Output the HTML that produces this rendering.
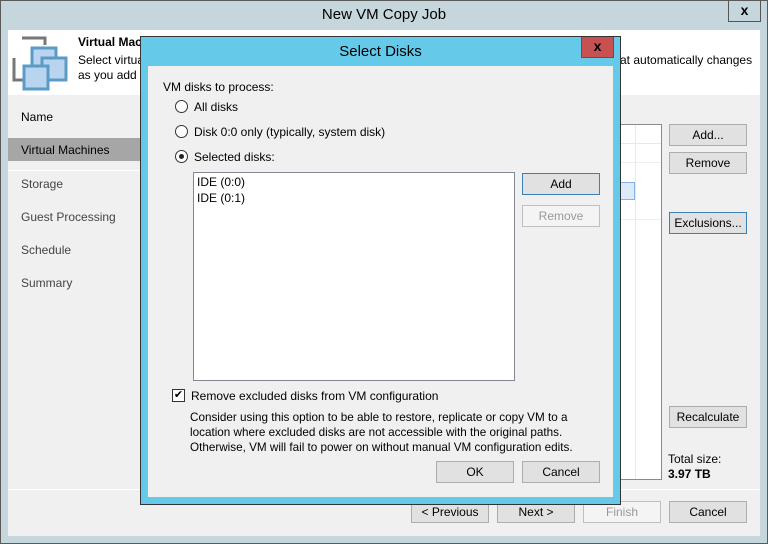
<!DOCTYPE html>
<html><head><style>
*{box-sizing:border-box;margin:0;padding:0}
body{width:768px;height:544px;position:relative;overflow:hidden;font-family:"Liberation Sans",sans-serif;font-size:12px;color:#000;background:#c5d7dd}
.a{position:absolute}
.btn{position:absolute;background:#e1e1e1;border:1px solid #adadad;text-align:center;line-height:20px;font-size:12px;width:78px;height:22px}
.dis{background:#f4f4f4;border-color:#bfbfbf;color:#999}
.foc{border-color:#3c7fb1}
.rad{position:absolute;width:13px;height:13px;border:1px solid #333;border-radius:50%;background:#fff}
.t{position:absolute;white-space:nowrap}
</style></head><body>
<div class="a" style="left:0;top:0;width:768px;height:544px;border:1px solid #5a5a5a"></div>
<div class="t" style="left:0;width:768px;top:6px;text-align:center;font-size:15px">New VM Copy Job</div>
<div class="a" style="left:728px;top:1px;width:33px;height:21px;border:1px solid #555;border-top:none;background:#c5d7dd;text-align:center;font-weight:bold;font-size:14px;line-height:19px">x</div>
<div class="a" style="left:8px;top:30px;width:752px;height:506px;background:#f0f0f0"></div>
<div class="a" style="left:8px;top:30px;width:752px;height:65px;background:#fff"></div>
<svg class="a" style="left:12px;top:36px" width="58" height="56">
<path d="M10 2H33V9" stroke="#777" stroke-width="3" fill="none"/><path d="M2 22V44H11" stroke="#777" stroke-width="3" fill="none"/>
<rect x="20" y="12" width="24" height="22" fill="#b9d4ee" stroke="#5b9bc5" stroke-width="3"/>
<rect x="30" y="22" width="24" height="22" fill="#b9d4ee" stroke="#5b9bc5" stroke-width="3"/>
<rect x="12" y="30" width="24" height="23" fill="#b9d4ee" stroke="#5b9bc5" stroke-width="3"/>
</svg>
<div class="t" style="left:78px;top:35px;font-weight:bold">Virtual Machines</div>
<div class="t" style="left:78px;top:53px">Select virtual machines to process</div>
<div class="t" style="left:78px;top:68px">as you add new VMs</div>
<div class="t" style="left:620px;top:53px">at automatically changes</div>
<div class="t" style="left:21px;top:110px">Name</div>
<div class="a" style="left:8px;top:138px;width:132px;height:23px;background:#a6a6a6"></div>
<div class="t" style="left:21px;top:143px">Virtual Machines</div>
<div class="a" style="left:8px;top:170px;width:132px;height:1px;background:#fff"></div>
<div class="t" style="left:21px;top:177px;color:#444">Storage</div>
<div class="t" style="left:21px;top:210px;color:#444">Guest Processing</div>
<div class="t" style="left:21px;top:243px;color:#444">Schedule</div>
<div class="t" style="left:21px;top:276px;color:#444">Summary</div>
<div class="a" style="left:8px;top:489px;width:752px;height:1px;background:#fff"></div>
<div class="a" style="left:600px;top:124px;width:62px;height:356px;background:#fff;border:1px solid #8a8a8a;border-left:none"></div>
<div class="a" style="left:635px;top:125px;width:1px;height:354px;background:#e8e8e8"></div>
<div class="a" style="left:600px;top:143px;width:61px;height:1px;background:#e8e8e8"></div>
<div class="a" style="left:600px;top:162px;width:61px;height:1px;background:#eee"></div>
<div class="a" style="left:600px;top:182px;width:35px;height:18px;background:#dcebfc;border:1px solid #84b3e6"></div>
<div class="a" style="left:600px;top:219px;width:61px;height:1px;background:#eee"></div>
<div class="btn" style="left:669px;top:124px">Add...</div>
<div class="btn" style="left:669px;top:152px">Remove</div>
<div class="btn foc" style="left:669px;top:212px">Exclusions...</div>
<div class="btn" style="left:669px;top:406px">Recalculate</div>
<div class="t" style="left:668px;top:452px">Total size:</div>
<div class="t" style="left:668px;top:467px;font-weight:bold">3.97 TB</div>
<div class="btn" style="left:411px;top:501px">&lt; Previous</div>
<div class="btn" style="left:497px;top:501px">Next &gt;</div>
<div class="btn dis" style="left:583px;top:501px">Finish</div>
<div class="btn" style="left:669px;top:501px">Cancel</div>
<div class="a" style="left:140px;top:36px;width:481px;height:469px;background:#65c9ea;border:1px solid #333"></div>
<div class="t" style="left:140px;width:481px;top:43px;text-align:center;font-size:15px">Select Disks</div>
<div class="a" style="left:581px;top:37px;width:33px;height:21px;background:#c75050;border:1px solid #555;border-top:none;text-align:center;font-weight:bold;font-size:14px;line-height:18px">x</div>
<div class="a" style="left:148px;top:66px;width:465px;height:431px;background:#f0f0f0"></div>
<div class="t" style="left:163px;top:80px">VM disks to process:</div>
<div class="rad" style="left:175px;top:100px"></div><div class="t" style="left:194px;top:100px">All disks</div>
<div class="rad" style="left:175px;top:125px"></div><div class="t" style="left:194px;top:125px">Disk 0:0 only (typically, system disk)</div>
<div class="rad" style="left:175px;top:150px"><div class="a" style="left:3px;top:3px;width:5px;height:5px;border-radius:50%;background:#222"></div></div><div class="t" style="left:194px;top:150px">Selected disks:</div>
<div class="a" style="left:193px;top:172px;width:322px;height:209px;background:#fff;border:1px solid #828790"></div>
<div class="t" style="left:197px;top:175px">IDE (0:0)</div>
<div class="t" style="left:197px;top:191px">IDE (0:1)</div>
<div class="btn foc" style="left:522px;top:173px;background:#e1e1e1">Add</div>
<div class="btn dis" style="left:522px;top:205px">Remove</div>
<div class="a" style="left:172px;top:389px;width:13px;height:13px;border:1px solid #333;background:#fff;font-size:11px;line-height:11px;text-align:center">✔</div>
<div class="t" style="left:191px;top:389px">Remove excluded disks from VM configuration</div>
<div class="t" style="left:190px;top:410px;line-height:15px;font-size:11.7px">Consider using this option to be able to restore, replicate or copy VM to a<br>location where excluded disks are not accessible with the original paths.<br>Otherwise, VM will fail to power on without manual VM configuration edits.</div>
<div class="btn" style="left:436px;top:461px">OK</div>
<div class="btn" style="left:522px;top:461px">Cancel</div>
</body></html>
